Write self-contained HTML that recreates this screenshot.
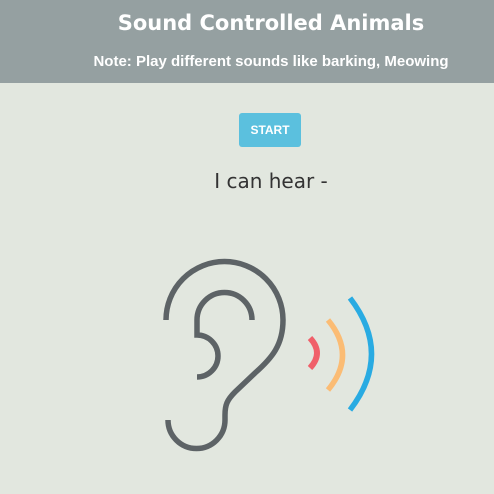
<!DOCTYPE html><html><head><style>
body{margin:0;width:494px;height:494px;background:#e2e7df;font-family:"Liberation Sans",sans-serif;overflow:hidden;position:relative}
.hd{position:absolute;left:0;top:0;width:494px;height:83px;background:#95a0a1}
.t{position:absolute;left:46px;width:450px;text-align:center;top:11px;color:#fff;font:bold 21px "DejaVu Sans",sans-serif}
.n{position:absolute;left:46px;width:450px;text-align:center;top:53px;color:#fff;font-weight:bold;font-size:15px}
.b{position:absolute;left:239px;top:113px;width:62px;height:34px;background:#5bc0de;border-radius:3px;color:#fff;font-weight:bold;font-size:12px;text-align:center;line-height:34px}
.h{position:absolute;left:46px;width:450px;text-align:center;top:169px;color:#333;font:20px "DejaVu Sans",sans-serif}
</style></head><body>
<div class="hd"></div>
<div class="t">Sound Controlled Animals</div>
<div class="n">Note: Play different sounds like barking, Meowing</div>
<div class="b">START</div>
<div class="h">I can hear -</div>
<svg width="494" height="494" style="position:absolute;left:0;top:0" fill="none" stroke-width="5.5">
<path stroke="#5d6366" d="M166,320 A58,58 0 0 1 283,320 C283,345 272,358 255,373 L235,392 C227,400 225,405 225,415 L225,420 A28,28 0 0 1 168,420"/>
<path stroke="#5d6366" d="M252,320 A27,27 0 0 0 197,320 L197,335 A21,21 0 0 1 197,377"/>
<path stroke="#f0606a" stroke-width="6" d="M310,338 Q324,353 310,368"/>
<path stroke="#fbbc74" d="M328,320 Q357,355 328,390"/>
<path stroke="#29abe2" d="M350,298 Q393,354 350,410"/>
</svg>
</body></html>
